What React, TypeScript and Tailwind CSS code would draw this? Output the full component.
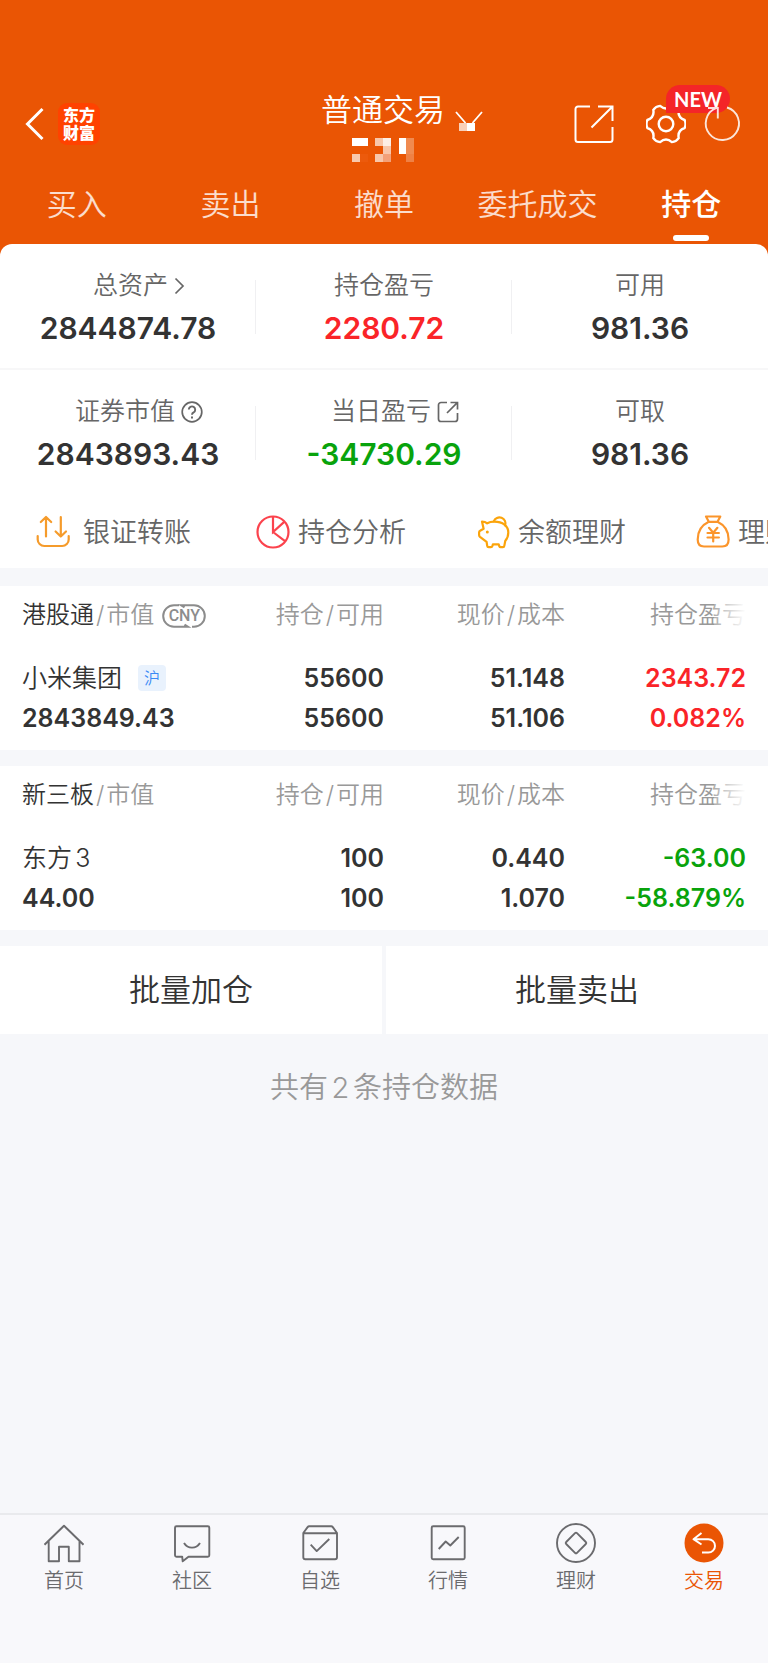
import type { ReactNode } from 'react';

const tabs = ['买入', '卖出', '撤单', '委托成交', '持仓'];

// Censored account number, one entry per mosaic block
const mosaic = [
  ['#ffffff', '#ffffff', '', '#f8c6aa', '#fdeee6', '', '#ffffff', '#f08a50'],
  ['', '', '', '', '#f8c6aa', '', '#ffffff', '#f08a50'],
  ['#f8c9ae', '#ec5a0c', '', '#f8c6aa', '#f3a078', '', '', '#ef8145'],
];

const QuestionIcon = () => (
  <svg width="22" height="22" viewBox="0 0 22 22" fill="none" stroke="currentColor" strokeWidth="1.7">
    <circle cx="11" cy="11" r="9.8" />
    <path d="M7.8 8.6a3.200 3.200 0 1 1 4.800 2.800c-1.100.6-1.600 1.100-1.600 2.300" strokeWidth="1.900" />
    <path d="M11 15.400v2" strokeWidth="2" />
  </svg>
);

const OpenIcon = () => (
  <svg width="22" height="22" viewBox="0 0 22 22" fill="none" stroke="currentColor" strokeWidth="1.700">
    <path d="M10 1.500H4A2.500 2.500 0 0 0 1.500 4v14A2.500 2.500 0 0 0 4 20.500h14a2.500 2.500 0 0 0 2.500-2.500v-6" />
    <path d="M10 12L20.300 1.700M13.500 1.500h7v7" />
  </svg>
);

const ArrowIcon = () => (
  <svg width="11" height="18" viewBox="0 0 11 18" fill="none" stroke="currentColor" strokeWidth="1.700">
    <path d="M1.500 1.500L9 9l-7.500 7.500" />
  </svg>
);

type Stat = { label: string; value: string; color?: string; icon?: ReactNode };

const stats: Stat[][] = [
  [
    { label: '总资产', value: '2844874.78', icon: <ArrowIcon /> },
    { label: '持仓盈亏', value: '2280.72', color: 'text-[#fa2428]' },
    { label: '可用', value: '981.36' },
  ],
  [
    { label: '证券市值', value: '2843893.43', icon: <QuestionIcon /> },
    { label: '当日盈亏', value: '-34730.29', color: 'text-[#09a30c]', icon: <OpenIcon /> },
    { label: '可取', value: '981.36' },
  ],
];

const shortcuts = [
  {
    label: '银证转账',
    icon: (
      <svg width="39" height="34" viewBox="0 0 39 34" fill="none" stroke="#f59b2b" strokeWidth="2.200" strokeLinecap="round" strokeLinejoin="round">
        <path d="M1.700 21v3.500a6.500 6.500 0 0 0 6.500 6.500h18a6.500 6.500 0 0 0 6.500-6.500V21" />
        <path d="M10 21.500V2.500M4.800 7L10 2l5.200 5M24.800 2v19.500M19.600 16.500l5.200 5 5.200-5" />
      </svg>
    ),
  },
  {
    label: '持仓分析',
    icon: (
      <svg width="34" height="34" viewBox="0 0 34 34" fill="none" stroke="#fb434d" strokeWidth="2.200">
        <circle cx="17" cy="17" r="15.500" />
        <path d="M17 1.500V17l11.500-10.400M17 17l12 9.200" />
      </svg>
    ),
  },
  {
    label: '余额理财',
    icon: (
      <svg width="34" height="34" viewBox="0 0 34 34" fill="none" stroke="#fba40b" strokeWidth="2.200" strokeLinecap="round" strokeLinejoin="round">
        <path d="M6 6.500c2 0 3.800.6 5.200 1.800 2-1.100 4.300-1.600 7-1.600 8.600 0 14.100 4.300 14.100 11 0 3.600-1.200 6-3 8l-1 5.200c-.1.800-.6 1.300-1.400 1.300h-2.200c-.8 0-1.200-.4-1.500-1.200l-.5-1.600h-5.800l-.5 1.600c-.2.800-.7 1.200-1.500 1.200h-2.200c-.9 0-1.400-.5-1.500-1.300l-.6-4.100-6.600-5c-.6-.5-.9-1-.9-1.800v-2.600c0-.8.3-1.300 1-1.600l3.500-2z" />
        <path d="M17.800 6.300a6 6 0 1 1 11.300 4.200" />
        <circle cx="11.300" cy="17" r="1.500" fill="#fba40b" stroke="none" />
      </svg>
    ),
  },
  {
    label: '理财产品',
    icon: (
      <svg width="34" height="34" viewBox="0 0 34 34" fill="none" stroke="#fb952b" strokeWidth="2.200" strokeLinecap="round" strokeLinejoin="round">
        <path d="M10 1.500h14.300l-2.800 5.300h-8.700z" />
        <path d="M12.800 6.800C6 10 1.700 16.500 1.700 24.500c0 5 1.800 7 6.300 7h18.300c4.500 0 6.300-2 6.300-7 0-8-4.300-14.500-11.100-17.700" />
        <path d="M13 12.800l4.200 5 4.200-5M17.200 17.800v8.700M11.500 18h11.400M11.500 22.500h11.400" />
      </svg>
    ),
  },
];

const holdings = [
  {
    market: '港股通',
    cny: true,
    name: '小米集团',
    tag: '沪',
    value: '2843849.43',
    amount: ['55600', '55600'],
    price: ['51.148', '51.106'],
    profit: ['2343.72', '0.082%'],
    color: 'text-[#fa2428]',
  },
  {
    market: '新三板',
    cny: false,
    name: '东方3',
    tag: '',
    value: '44.00',
    amount: ['100', '100'],
    price: ['0.440', '1.070'],
    profit: ['-63.00', '-58.879%'],
    color: 'text-[#09a30c]',
  },
];

const navItems = [
  {
    label: '首页',
    icon: <path d="M.5 21.700L20 2.700l19.500 19M4.700 18v20.300H15V23.700h9.800v14.600h10.700V18" />,
  },
  {
    label: '社区',
    icon: (
      <>
        <path d="M4.500 3.300h31.300c.9 0 1.500.6 1.500 1.500v27.400c0 .9-.6 1.500-1.500 1.500H16.500l-5.800 4.600-.5-4.600H4.500c-.9 0-1.500-.6-1.500-1.500V4.800c0-.9.6-1.500 1.500-1.500z" />
        <path d="M12 20c3.800 6.200 12.200 6.200 16 0" />
      </>
    ),
  },
  {
    label: '自选',
    icon: (
      <>
        <path d="M3.300 10l4.300-5.900c.4-.5.900-.8 1.600-.8h22c.7 0 1.200.3 1.600.8L37 10v24.200c0 1.200-.8 2-2 2H5.300c-1.200 0-2-.8-2-2zM3.300 10.200H37" />
        <path d="M10.700 21.700l6 6.400L29.300 16" />
      </>
    ),
  },
  {
    label: '行情',
    icon: (
      <>
        <rect x="3.700" y="3.300" width="33" height="33" rx="1.500" />
        <path d="M10.700 26l7-7.500 4.600 4L30.700 14" />
      </>
    ),
  },
  {
    label: '理财',
    icon: (
      <>
        <circle cx="20" cy="20" r="19" />
        <path d="M19 10.200c.6-.6 1.400-.6 2 0l8.800 8.800c.6.600.6 1.400 0 2L21 29.800c-.6.600-1.400.600-2 0L10.200 21c-.6-.6-.6-1.400 0-2z" />
      </>
    ),
  },
  {
    label: '交易',
    active: true,
    icon: (
      <>
        <circle cx="20" cy="20" r="19.500" fill="#ea5504" stroke="none" />
        <path d="M17.500 10l-8 6.200 8 5.300M9.500 16.200h14.800a6.700 6.700 0 0 1 0 13.400H18" stroke="#fff" strokeWidth="2" />
      </>
    ),
  },
];

function Header() {
  return (
    <header className="bg-[#ea5504] pt-21 text-white">
      <div className="flex h-20 items-center">
        <div className="flex flex-1 items-center gap-3 pl-6">
          <button aria-label="返回">
            <svg width="22" height="34" viewBox="0 0 22 34" fill="none" stroke="currentColor" strokeWidth="3">
              <path d="M18.500 2L3.500 17l15 15" />
            </svg>
          </button>
          <div className="flex size-[42px] flex-col items-center justify-center rounded-[9px] bg-[#ff4200] text-base/[18px] font-black">
            <span>东方</span>
            <span>财富</span>
          </div>
        </div>

        <div className="flex flex-col items-center pt-1">
          <button className="relative text-[31px]/10 font-[350]">
            普通交易
            <svg className="absolute top-5 left-full ml-2.5" width="28" height="22" viewBox="0 0 28 22" fill="none">
              <path d="M1 2l9.500 11M27 2l-9.500 11" stroke="#fff" strokeWidth="1.800" />
              <path d="M4 13h8v8H4z" fill="#f9d0b9" />
              <path d="M12 13h8v8h-8z" fill="#fff" />
            </svg>
          </button>
          <svg className="mt-2" width="62" height="24" viewBox="0 0 8 3" preserveAspectRatio="none" shapeRendering="crispEdges">
            {mosaic.map((row, y) =>
              row.map((fill, x) => fill && <rect key={`${x}-${y}`} x={x} y={y} width="1" height="1" fill={fill} />)
            )}
          </svg>
        </div>

        <div className="flex flex-1 items-center justify-end pr-[26px]">
          <button aria-label="分享">
            <svg width="40" height="40" viewBox="0 0 40 40" fill="none" stroke="currentColor" strokeWidth="2">
              <path d="M16 2.500H4A2.500 2.500 0 0 0 1.500 5v30.500A2.500 2.500 0 0 0 4 38h32a2.500 2.500 0 0 0 2.500-2.500V23" />
              <path d="M24 2.500h14.500V17M17.500 23.500l21-21" />
            </svg>
          </button>
          <button aria-label="设置" className="relative ml-8">
            <svg width="40" height="40" viewBox="-20 -20 40 40" fill="none" stroke="currentColor" strokeWidth="2.400">
              <path d="M18.600-4Q20.500 0 18.600 4Q11.300 6.500 12.700 14.100Q10.200 17.800 5.900 18.100Q0 13-5.900 18.100Q-10.200 17.800-12.700 14.100Q-11.300 6.500-18.600 4Q-20.500 0-18.600-4Q-11.300-6.500-12.700-14.100Q-10.200-17.800-5.900-18.100Q0-13 5.900-18.100Q10.200-17.800 12.700-14.100Q11.300-6.500 18.600-4Z" />
              <circle r="7.300" />
            </svg>
            <span className="absolute -top-[19px] left-5 rounded-full rounded-bl-sm bg-[#f42528] px-2 font-[Lato] text-xl/7 font-bold">
              NEW
            </span>
          </button>
          <button aria-label="刷新" className="relative ml-4">
            <svg width="40" height="40" viewBox="0 0 40 40" fill="none" stroke="currentColor" strokeWidth="1.900" opacity="0.850">
              <path d="M25 3.500A16.600 16.600 0 1 1 14.500 3.900" />
              <path d="M6 4h9.800v10.500" />
            </svg>
          </button>
        </div>
      </div>

      <nav className="grid h-20 grid-cols-5">
        {tabs.map((tab) => (
          <a
            key={tab}
            href="#"
            className={`relative flex items-center justify-center text-[30px] ${
              tab === '持仓'
                ? 'font-medium after:absolute after:bottom-[3px] after:h-1.5 after:w-9 after:rounded-full after:bg-white'
                : 'font-[350] text-white/80'
            }`}
          >
            {tab}
          </a>
        ))}
      </nav>
    </header>
  );
}

function Summary() {
  return (
    <section className="rounded-t-xl bg-white">
      {stats.map((row, idx) => (
        <dl key={idx} className={`grid grid-cols-3 ${idx === 0 ? 'border-b-2 border-[#f7f7f8]' : ''}`}>
          {row.map((stat) => (
            <div
              key={stat.label}
              className="relative pt-[26px] pb-5 text-center not-last:after:absolute not-last:after:top-9 not-last:after:right-0 not-last:after:h-[54px] not-last:after:w-px not-last:after:bg-[#f0f0f2]"
            >
              <dt
                className={`flex h-8 items-center justify-center gap-1.5 text-[25px] font-[350] text-[#666] ${
                  stat.icon ? 'pl-5.5' : ''
                }`}
              >
                {stat.label}
                {stat.icon}
              </dt>
              <dd className={`mt-1.5 text-[30px]/10 font-semibold ${stat.color ?? ''}`}>{stat.value}</dd>
            </div>
          ))}
        </dl>
      ))}

      <div className="flex h-[74px] items-center overflow-hidden pt-0.5 pl-9 text-[27px] whitespace-nowrap text-[#666]">
        {shortcuts.map((item) => (
          <a key={item.label} href="#" className="flex w-[220px] shrink-0 items-center gap-2 font-[350]">
            {item.icon}
            <span className="pt-0.5">{item.label}</span>
          </a>
        ))}
      </div>
    </section>
  );
}

function CnyBadge() {
  return (
    <span className="relative ml-2 inline-flex h-6 w-11 items-center justify-center align-middle font-[Roboto] text-base font-medium text-[#8c8c8c]">
      <svg className="absolute inset-0" width="44" height="24" viewBox="0 0 44 24" fill="none" stroke="currentColor" strokeWidth="2">
        <path d="M17 1.200h-5a10.800 10.800 0 0 0 0 21.600h14l-3.500-2.200" />
        <path d="M30 22.800h2a10.800 10.800 0 0 0 0-21.600H19l3.500 2.200" />
      </svg>
      CNY
    </span>
  );
}

const Slash = () => <span className="mx-0.5">/</span>;

function Holding({ item }: { item: (typeof holdings)[number] }) {
  return (
    <section className="bg-white px-[22px]">
      <table className="w-full table-fixed text-right whitespace-nowrap">
        <thead>
          <tr className="h-14 text-2xl text-[#999]">
            <th className="pt-0.5 text-left font-[350]">
              <span className="text-[#333]">{item.market}</span>
              <Slash />
              市值
              {item.cny && <CnyBadge />}
            </th>
            <th className="pt-0.5 font-[350]">
              持仓
              <Slash />
              可用
            </th>
            <th className="pt-0.5 font-[350]">
              现价
              <Slash />
              成本
            </th>
            <th className="relative pt-0.5 font-[350] after:absolute after:inset-y-0 after:right-0 after:w-8 after:bg-linear-to-r after:from-white/20 after:to-white">
              持仓盈亏
            </th>
          </tr>
        </thead>
        <tbody>
          <tr className="text-[25px]/10 font-semibold">
            <td className="pt-4 pb-3 text-left">
              <div className="flex items-center gap-4 font-[350]">
                {item.name}
                {item.tag && (
                  <span className="rounded-sm bg-[#e9f2fd] px-1.5 text-base/[26px] text-[#3a8af5]">{item.tag}</span>
                )}
              </div>
              <div>{item.value}</div>
            </td>
            <td className="pt-4 pb-3">
              <div>{item.amount[0]}</div>
              <div>{item.amount[1]}</div>
            </td>
            <td className="pt-4 pb-3">
              <div>{item.price[0]}</div>
              <div>{item.price[1]}</div>
            </td>
            <td className={`pt-4 pb-3 ${item.color}`}>
              <div>{item.profit[0]}</div>
              <div>{item.profit[1]}</div>
            </td>
          </tr>
        </tbody>
      </table>
    </section>
  );
}

function BottomNav() {
  return (
    <nav className="mt-auto grid grid-cols-6 border-t-2 border-[#e9eaed] bg-[#f8f8fb] pt-2 pb-[66px]">
      {navItems.map((item) => (
        <a
          key={item.label}
          href="#"
          className={`flex flex-col items-center gap-0.5 text-xl/8 font-[350] ${
            item.active ? 'text-[#ea5504]' : 'text-[#6b6b6e]'
          }`}
        >
          <svg width="40" height="40" viewBox="0 0 40 40" fill="none" stroke="currentColor" strokeWidth="1.900" strokeLinejoin="round">
            {item.icon}
          </svg>
          {item.label}
        </a>
      ))}
    </nav>
  );
}

export default function App() {
  return (
    <div className="flex min-h-screen flex-col bg-[#f6f7fa] font-[Inter,'Noto_Sans_CJK_SC',sans-serif] text-[#333] [text-autospace:normal]">
      <Header />
      <div className="bg-[#ea5504]">
        <Summary />
      </div>

      <main className="mt-[18px] flex flex-col gap-4">
        {holdings.map((item) => (
          <Holding key={item.name} item={item} />
        ))}

        <div className="grid grid-cols-2 gap-1 text-[31px] font-[350]">
          <button className="h-[88px] bg-white">批量加仓</button>
          <button className="h-[88px] bg-white">批量卖出</button>
        </div>
      </main>

      <p className="mt-8 text-center text-[29px]/11 font-[350] text-[#999]">共有2条持仓数据</p>

      <BottomNav />
    </div>
  );
}
